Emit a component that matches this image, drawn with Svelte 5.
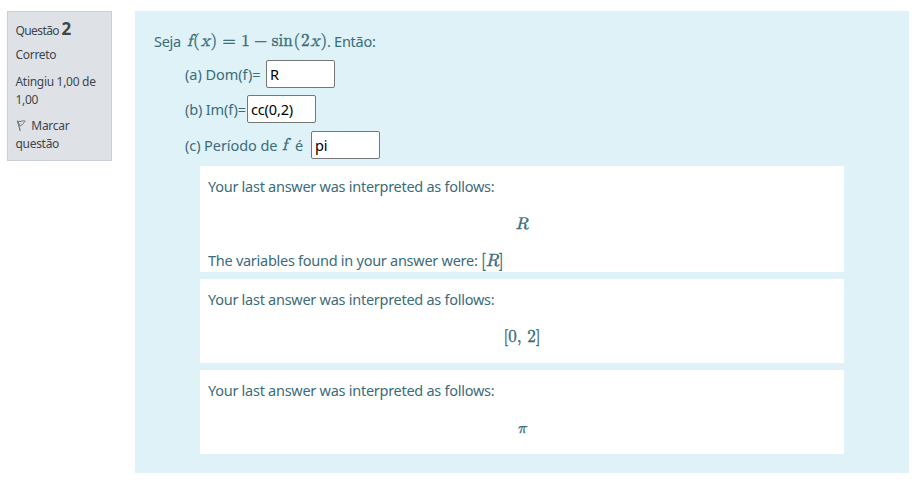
<script>
  const parts = [
    { id: 'a', value: 'R' },
    { id: 'b', value: 'cc(0,2)' },
    { id: 'c', value: 'pi' }
  ];
  const interpreted = 'Your last answer was interpreted as follows:';
</script>

<main class="question">
  <aside class="info">
    <h3>Questão <b>2</b></h3>
    <p class="state">Correto</p>
    <p class="grade">Atingiu 1,00 de<br />1,00</p>
    <p class="flag">
      <svg viewBox="0 0 12 13" width="12" height="13" aria-hidden="true">
        <path d="M1.3 1.6 L4.3 12" fill="none" stroke="#777" stroke-width="1.2" />
        <path d="M2 2.3 C5 3.3 6 1 9.2 2.1 C7.5 3.5 7.1 5.8 4 7.1 Z" fill="#ddd" stroke="#777" stroke-width="1" />
      </svg>
      <span>Marcar</span><br />questão
    </p>
  </aside>

  <section class="content">
    <div class="line intro">
      <span class="seja">Seja</span>
      <span class="math formula"><i>f</i><span>(</span><i>x</i><span>)</span><span class="op eq">=</span><span>1</span><span class="op">−</span><span>sin</span><span>(</span><span>2</span><i>x</i><span>)</span></span>
      <span>. Então:</span>
    </div>
    <div class="line part">
      <span class="label-a">(a) Dom(f)=</span>
      <input type="text" aria-label="a" value={parts[0].value} />
    </div>
    <div class="line part">
      <span class="label-b">(b) Im(f)=</span>
      <input type="text" aria-label="b" value={parts[1].value} />
    </div>
    <div class="line part last">
      <span class="label-c">(c) Período de</span>
      <i class="math f">f</i>
      <span class="e">é</span>
      <input type="text" aria-label="c" value={parts[2].value} />
    </div>

    <div class="feedback first">
      <p>{interpreted}</p>
      <div class="math display"><i>R</i></div>
      <p class="vars">The variables found in your answer were: <span class="math">[<i>R</i>]</span></p>
    </div>
    <div class="feedback">
      <p>{interpreted}</p>
      <div class="math display"><span>[0,</span><span class="two">2]</span></div>
    </div>
    <div class="feedback">
      <p>{interpreted}</p>
      <div class="math display"><i class="pi">π</i></div>
    </div>
  </section>
</main>

<style>
  :global(body) {
    background: #fff;
  }
  .question {
    display: flex;
    align-items: flex-start;
    gap: 23px;
    box-sizing: border-box;
    width: 917px;
    height: 493px;
    padding: 11px 8px 0 7px;
    font-family: "Noto Sans", "Open Sans", sans-serif;
  }
  p, h3 {
    margin: 0;
    font-weight: 400;
  }
  .info {
    box-sizing: border-box;
    width: 105px;
    height: 150px;
    flex: none;
    padding: 7px 0 0 7.5px;
    border: 1px solid #caced6;
    background: #dee2e6;
    color: #40464c;
    font-size: 12px;
    line-height: 18px;
    white-space: nowrap;
    letter-spacing: -0.3px;
  }
  h3 {
    font-size: 12px;
    line-height: 20px;
    letter-spacing: -0.6px;
  }
  h3 b {
    font-size: 17px;
  }
  .state {
    margin-top: 5px;
  }
  .grade {
    margin-top: 9px;
  }
  .flag {
    margin-top: 8px;
  }
  .flag svg {
    vertical-align: -2px;
  }
  .flag span {
    margin-left: 1px;
  }
  .content {
    box-sizing: border-box;
    width: 774px;
    height: 462px;
    padding: 16px 65px 0 19px;
    background: #def2f8;
    color: #3b6c7b;
    font-size: 14.5px;
    letter-spacing: -0.27px;
    white-space: nowrap;
  }
  .line {
    display: flex;
    align-items: center;
    height: 28px;
  }
  .seja {
    width: 33px;
  }
  .part {
    margin: 0 0 7px 31px;
  }
  .part.last {
    margin-top: 8px;
  }
  .intro {
    margin-bottom: 5px;
  }
  .label-a {
    width: 81px;
    letter-spacing: -0.05px;
  }
  .label-b {
    width: 62px;
    letter-spacing: -0.15px;
  }
  .label-c {
    width: 97px;
    letter-spacing: -0.08px;
  }
  .f {
    width: 13px;
  }
  .e {
    width: 16px;
  }
  input {
    box-sizing: border-box;
    width: 69px;
    height: 28px;
    margin: 0;
    padding: 1px 3px;
    border: 1px solid #767676;
    border-radius: 2px;
    background: #fff;
    color: #000;
    font: 14.5px "Noto Sans", sans-serif;
    letter-spacing: -0.15px;
  }
  .math {
    font-family: "Latin Modern Math", "Liberation Serif", serif;
    font-size: 17px;
    letter-spacing: 0;
    -webkit-text-stroke: 0.4px currentColor;
  }
  .formula {
    display: flex;
    align-items: center;
    width: 140px;
    justify-content: space-between;
  }
  .formula .op {
    margin: 0 3.5px;
  }
  .formula .eq {
    margin: 0 4.5px;
  }
  .feedback {
    box-sizing: border-box;
    width: 644px;
    height: 84px;
    margin: 0 0 7px 46px;
    padding: 9px 8px 0;
    background: #fff;
  }
  .feedback p {
    line-height: 22px;
  }
  .feedback.first {
    height: 106px;
  }
  .display {
    display: flex;
    justify-content: center;
    margin-top: 15px;
    line-height: 24px;
  }
  .two {
    margin-left: 6px;
  }
  .pi {
    font-size: 16px;
  }
  .feedback .vars {
    margin-top: 13px;
  }
  .vars .math {
    font-size: 17.5px;
  }
</style>
